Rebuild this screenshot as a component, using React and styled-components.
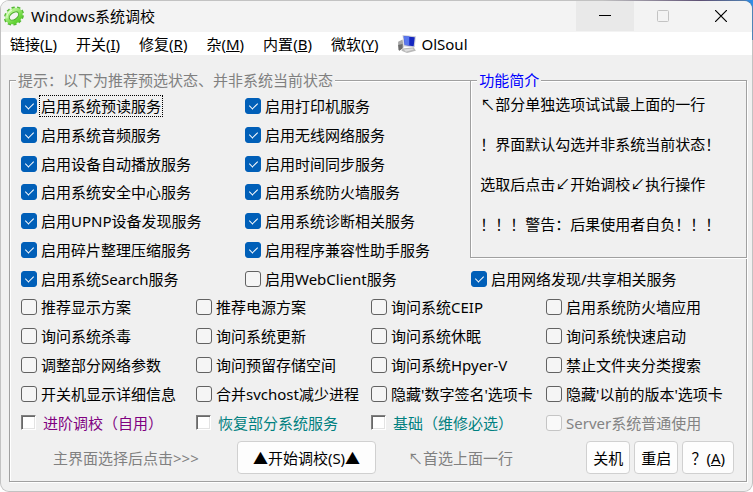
import { createGlobalStyle, styled } from "styled-components";

const GlobalStyle = createGlobalStyle`
  * {
    box-sizing: border-box;
  }
  body {
    margin: 0;
    font-family: "Noto Sans", "Noto Sans CJK SC", sans-serif;
    font-size: 15px;
    line-height: 20px;
    color: #000000;
  }
  button,
  input {
    font: inherit;
    color: inherit;
  }
`;

const Desktop = styled.div`
  min-height: 100vh;
  background: linear-gradient(
    90deg,
    #ffffff 0 80%,
    #4a3272 93%,
    #2f8fe8 100%
  );
  background-size: 100% 40px;
  background-repeat: no-repeat;
  background-color: #ffffff;
`;

const Window = styled.div`
  min-height: 100vh;
  border: 1px solid rgba(120, 120, 120, 0.45);
  border-radius: 9px;
  background: #f0f0f0;
  background-clip: padding-box;
  overflow: hidden;
`;

const TitleBar = styled.header`
  height: 31px;
  display: flex;
  align-items: center;
  padding: 0 2px 2px;
  background: #f3f3f3;
`;

const Title = styled.h1`
  margin: 0 auto 0 6px;
  font-size: 15px;
  font-weight: 400;
`;

const CaptionButton = styled.button`
  width: 58px;
  height: 30px;
  align-self: flex-start;
  display: flex;
  justify-content: center;
  align-items: center;
  padding: 0;
  border: none;
  background: ${(props) => (props.$hover ? "#e9e9e9" : "transparent")};
  color: ${(props) => (props.disabled ? "#c3c3c3" : "#000000")};
`;

const MenuBar = styled.nav`
  height: 23px;
  display: flex;
  align-items: center;
  gap: 1px;
  background: #ffffff;
`;

const MenuItem = styled.button`
  display: flex;
  align-items: center;
  gap: 4px;
  padding: 0 9px;
  border: none;
  background: transparent;
  white-space: nowrap;
`;

const Main = styled.main`
  display: grid;
  grid-template-columns: 5fr 3fr;
  padding: 15px 5px 9px 8px;
`;

const Group = styled.fieldset`
  min-width: 0;
  margin: 0;
  border: 1px solid #a0a0a0;
  box-shadow: 1px 1px 0 #ffffff, inset 1px 1px 0 #ffffff;
`;

const Legend = styled.legend`
  padding: 0 2px;
  background: #f0f0f0;
  color: ${(props) => props.$color};
`;

const SettingsGroup = styled(Group)`
  grid-area: 1 / 1 / 2 / 3;
  padding: 2px 0 7px 11px;
  & > legend {
    margin-left: -5px;
  }
`;

const IntroGroup = styled(Group)`
  grid-area: 1 / 2 / 2 / 3;
  align-self: start;
  padding: 4px 0 23px 9px;
  & > legend {
    margin-left: -3px;
  }
`;

const Intro = styled.div`
  display: flex;
  flex-direction: column;
  gap: 20px;
  p {
    margin: 0;
    white-space: nowrap;
  }
`;

const ServiceGrid = styled.div`
  height: 201px;
  margin-right: 25px;
  display: grid;
  grid-template-columns: 224fr 226fr 250fr;
  grid-template-rows: repeat(7, 1fr);
  align-items: center;
`;

const OptionGrid = styled.div`
  height: 144px;
  margin-right: 25px;
  display: grid;
  grid-template-columns: repeat(4, minmax(0, 1fr));
  grid-template-rows: repeat(5, 1fr);
  align-items: center;
`;

const CheckLabel = styled.label`
  display: flex;
  align-items: center;
  gap: ${(props) => (props.$classic ? "6px" : "3px")};
  color: ${(props) => props.$color || "#000000"};
  white-space: nowrap;
`;

const CheckText = styled.span`
  padding: 0 1px;
  outline: ${(props) => (props.$focused ? "1px dotted #000000" : "none")};
`;

const Check = styled.input`
  flex: none;
  appearance: none;
  width: 16px;
  height: 16px;
  margin: 0;
  display: grid;
  justify-content: center;
  border: 1px solid #626262;
  border-radius: 3px;
  background: #f5f5f5;
  &:checked {
    border-color: #005fb8;
    background: #005fb8;
  }
  &:checked::after {
    content: "";
    width: 4px;
    height: 7px;
    margin-top: 2px;
    border: solid #ffffff;
    border-width: 0 1px 1px 0;
    transform: rotate(45deg);
  }
  &:disabled {
    border-color: #c5c5c5;
    background: #f9f9f9;
  }
`;

const ClassicCheck = styled(Check)`
  width: 15px;
  height: 15px;
  border: 1px solid;
  border-color: #808080 #ffffff #ffffff #808080;
  border-radius: 0;
  background: #ffffff;
  box-shadow: inset 1px 1px 0 #696969, inset -1px -1px 0 #e3e3e3;
`;

const Footer = styled.div`
  margin: 4px 12px 0 0;
  display: grid;
  grid-template-columns: 216px 139px 1fr auto;
  align-items: center;
`;

const Hint = styled.span`
  padding-left: 32px;
  color: #808080;
  white-space: nowrap;
`;

const PushButton = styled.button`
  height: 33px;
  padding: 0 ${(props) => (props.$wide ? "8px" : "6px")};
  border: 1px solid #d0d0d0;
  border-radius: 4px;
  background: #fdfdfd;
  white-space: nowrap;
`;

const ButtonRow = styled.div`
  display: flex;
  gap: 4px;
`;

const menus = [
  ["链接", "L"],
  ["开关", "I"],
  ["修复", "R"],
  ["杂", "M"],
  ["内置", "B"],
  ["微软", "Y"],
];

const services = [
  { text: "启用系统预读服务", checked: true, focused: true },
  { text: "启用打印机服务", checked: true },
  { text: "启用系统音频服务", checked: true },
  { text: "启用无线网络服务", checked: true },
  { text: "启用设备自动播放服务", checked: true },
  { text: "启用时间同步服务", checked: true },
  { text: "启用系统安全中心服务", checked: true },
  { text: "启用系统防火墙服务", checked: true },
  { text: "启用UPNP设备发现服务", checked: true },
  { text: "启用系统诊断相关服务", checked: true },
  { text: "启用碎片整理压缩服务", checked: true },
  { text: "启用程序兼容性助手服务", checked: true },
  { text: "启用系统Search服务", checked: true },
  { text: "启用WebClient服务" },
  { text: "启用网络发现/共享相关服务", checked: true },
];

const options = [
  { text: "推荐显示方案" },
  { text: "推荐电源方案" },
  { text: "询问系统CEIP" },
  { text: "启用系统防火墙应用" },
  { text: "询问系统杀毒" },
  { text: "询问系统更新" },
  { text: "询问系统休眠" },
  { text: "询问系统快速启动" },
  { text: "调整部分网络参数" },
  { text: "询问预留存储空间" },
  { text: "询问系统Hpyer-V" },
  { text: "禁止文件夹分类搜索" },
  { text: "开关机显示详细信息" },
  { text: "合并svchost减少进程" },
  { text: "隐藏'数字签名'选项卡" },
  { text: "隐藏'以前的版本'选项卡" },
  { text: "进阶调校（自用）", classic: true, color: "#800080" },
  { text: "恢复部分系统服务", classic: true, color: "#008080" },
  { text: "基础（维修必选）", classic: true, color: "#008080" },
  { text: "Server系统普通使用", disabled: true, color: "#838383" },
];

const CheckItem = ({ item }) => {
  const Box = item.classic ? ClassicCheck : Check;
  return (
    <CheckLabel $classic={item.classic} $color={item.color}>
      <Box
        type="checkbox"
        defaultChecked={item.checked}
        disabled={item.disabled}
      />
      <CheckText $focused={item.focused}>{item.text}</CheckText>
    </CheckLabel>
  );
};

const GearIcon = () => (
  <svg width="22" height="22" viewBox="0 0 22 22" aria-hidden="true">
    <defs>
      <linearGradient id="gear" x1="0" y1="0" x2="0" y2="1">
        <stop offset="0" stopColor="#b4f28e" />
        <stop offset="1" stopColor="#62d234" />
      </linearGradient>
    </defs>
    <g transform="rotate(-38 11 11)">
      <ellipse
        cx="11"
        cy="11"
        rx="9"
        ry="7.2"
        fill="none"
        stroke="#55b935"
        strokeWidth="3.4"
        strokeDasharray="3 2.1"
      />
      <ellipse
        cx="11"
        cy="11"
        rx="7.4"
        ry="5.4"
        fill="none"
        stroke="url(#gear)"
        strokeWidth="4.2"
      />
      <ellipse
        cx="11"
        cy="11"
        rx="5.3"
        ry="3.2"
        fill="#f3f3f3"
        stroke="#48ab27"
      />
      <path d="M4 8.6 A8 6 0 0 1 13 5" fill="none" stroke="#e2ffd0" />
    </g>
  </svg>
);

const ComputerIcon = () => (
  <svg width="20" height="20" viewBox="0 0 18 18" aria-hidden="true">
    <path d="M1 7l4-2 1 7-4 3-1-1z" fill="#a8a8a8" />
    <path d="M1 10l4-1v4l-3 2z" fill="#6c6c6c" />
    <path d="M5 1l12 1-1 10-10-1z" fill="#c9ccd8" />
    <path d="M6 2l10 1-1 8-8-1z" fill="#1426c0" />
    <path d="M6 2l5 0 0 8-4 0z" fill="#5a78ee" />
    <path d="M5 13l10-1 2 3-8 2-5-2z" fill="#b9b9b9" />
    <path d="M6 14l8-1 1 1-7 2z" fill="#dddddd" />
  </svg>
);

// two columns of services, the last one sits alone below the intro group
const ServiceCell = styled.div`
  grid-column: ${(props) => props.$column};
  grid-row: ${(props) => props.$row};
`;

export default function App() {
  return (
    <Desktop lang="zh-CN">
      <GlobalStyle />
      <Window>
        <TitleBar>
          <GearIcon />
          <Title>Windows系统调校</Title>
          <CaptionButton $hover aria-label="最小化">
            <svg width="12" height="12" viewBox="0 0 12 12">
              <path d="M0 5.5h12" stroke="currentColor" />
            </svg>
          </CaptionButton>
          <CaptionButton disabled aria-label="最大化">
            <svg width="12" height="12" viewBox="0 0 12 12" fill="none">
              <rect
                x="0.5"
                y="0.5"
                width="11"
                height="11"
                rx="1"
                stroke="currentColor"
              />
            </svg>
          </CaptionButton>
          <CaptionButton aria-label="关闭">
            <svg width="12" height="12" viewBox="0 0 12 12">
              <path
                d="M0 0l12 12M12 0L0 12"
                stroke="currentColor"
                strokeWidth="1.2"
              />
            </svg>
          </CaptionButton>
        </TitleBar>
        <MenuBar>
          {menus.map(([name, key]) => (
            <MenuItem key={key}>
              <span>
                {name}(<u>{key}</u>)
              </span>
            </MenuItem>
          ))}
          <MenuItem>
            <ComputerIcon />
            OlSoul
          </MenuItem>
        </MenuBar>
        <Main>
          <SettingsGroup>
            <Legend $color="#808080">
              提示：以下为推荐预选状态、并非系统当前状态
            </Legend>
            <ServiceGrid>
              {services.map((item, index) => {
                const last = index === services.length - 1;
                return (
                  <ServiceCell
                    key={item.text}
                    $column={last ? 3 : (index % 2) + 1}
                    $row={last ? 7 : Math.floor(index / 2) + 1}
                  >
                    <CheckItem item={item} />
                  </ServiceCell>
                );
              })}
            </ServiceGrid>
            <OptionGrid>
              {options.map((item) => (
                <CheckItem key={item.text} item={item} />
              ))}
            </OptionGrid>
            <Footer>
              <Hint>主界面选择后点击&gt;&gt;&gt;</Hint>
              <PushButton>▲开始调校(S)▲</PushButton>
              <Hint>↖首选上面一行</Hint>
              <ButtonRow>
                <PushButton>关机</PushButton>
                <PushButton>重启</PushButton>
                <PushButton $wide>
                  ？(<u>A</u>)
                </PushButton>
              </ButtonRow>
            </Footer>
          </SettingsGroup>
          <IntroGroup>
            <Legend $color="#0000ff">功能简介</Legend>
            <Intro>
              <p>↖部分单独选项试试最上面的一行</p>
              <p>！界面默认勾选并非系统当前状态！</p>
              <p>选取后点击↙开始调校↙执行操作</p>
              <p>！！！警告：后果使用者自负！！！</p>
            </Intro>
          </IntroGroup>
        </Main>
      </Window>
    </Desktop>
  );
}
